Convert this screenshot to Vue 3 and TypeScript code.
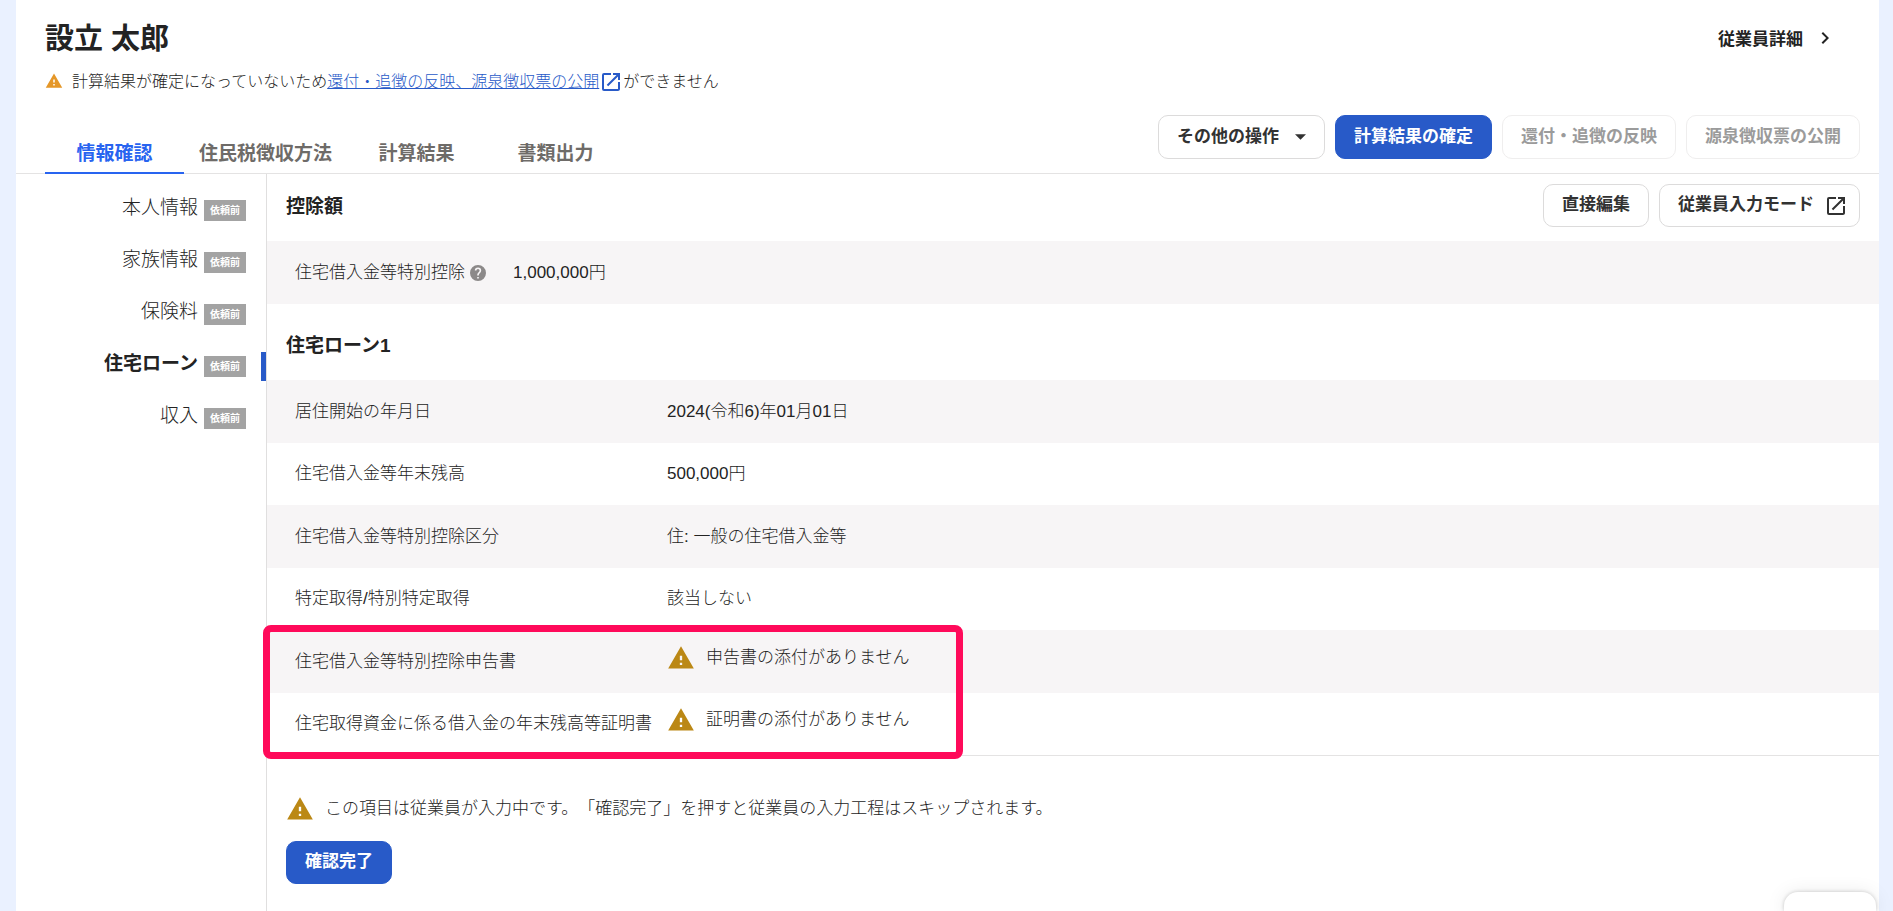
<script setup lang="ts">
import { ref } from 'vue'

interface Row {
  label: string
  value: string
  warn?: boolean
}

const WARNING_PATH = 'M1 21h22L12 2 1 21zm12-3h-2v-2h2v2zm0-4h-2v-4h2v4z'
const EXTERNAL_PATH =
  'M19 19H5V5h7V3H5a2 2 0 0 0-2 2v14a2 2 0 0 0 2 2h14c1.1 0 2-.9 2-2v-7h-2v7zM14 3v2h3.59l-9.83 9.83 1.41 1.41L19 6.41V10h2V3h-7z'

const tabs: string[] = ['情報確認', '住民税徴収方法', '計算結果', '書類出力']
const activeTab = ref('情報確認')

const sections: string[] = ['本人情報', '家族情報', '保険料', '住宅ローン', '収入']
const activeSection = ref('住宅ローン')

const loanRows: Row[] = [
  { label: '居住開始の年月日', value: '2024(令和6)年01月01日' },
  { label: '住宅借入金等年末残高', value: '500,000円' },
  { label: '住宅借入金等特別控除区分', value: '住: 一般の住宅借入金等' },
  { label: '特定取得/特別特定取得', value: '該当しない' },
  { label: '住宅借入金等特別控除申告書', value: '申告書の添付がありません', warn: true },
  { label: '住宅取得資金に係る借入金の年末残高等証明書', value: '証明書の添付がありません', warn: true },
]
</script>

<template>
  <div class="page">
    <div class="panel">
      <header class="header">
        <div class="title-row">
          <h1>設立 太郎</h1>
          <a class="detail-link" href="#detail">
            従業員詳細
            <svg class="chevron" viewBox="0 0 24 24" aria-hidden="true">
              <path d="M10 6 8.59 7.41 13.17 12l-4.58 4.59L10 18l6-6z" />
            </svg>
          </a>
        </div>
        <p class="alert">
          <svg class="alert-icon" viewBox="0 0 24 24" aria-hidden="true"><path :d="WARNING_PATH" /></svg>
          <span>計算結果が確定になっていないため</span>
          <a href="#help">
            <span class="link-text">還付・追徴の反映、源泉徴収票の公開</span>
            <svg class="ext" viewBox="0 0 24 24" aria-hidden="true"><path :d="EXTERNAL_PATH" /></svg>
          </a>
          <span>ができません</span>
        </p>
        <div class="tab-row">
          <nav class="tabs">
            <a
              v-for="tab in tabs"
              :key="tab"
              href="#"
              :class="['tab', { active: tab === activeTab }]"
              @click.prevent="activeTab = tab"
            >{{ tab }}</a>
          </nav>
          <div class="actions">
            <button type="button" class="btn menu-btn">
              その他の操作
              <svg class="caret" viewBox="0 0 12 6" aria-hidden="true"><path d="M0 0h12L6 6z" /></svg>
            </button>
            <button type="button" class="btn primary">計算結果の確定</button>
            <button type="button" class="btn" disabled>還付・追徴の反映</button>
            <button type="button" class="btn" disabled>源泉徴収票の公開</button>
          </div>
        </div>
      </header>

      <div class="body">
        <nav class="side">
          <a
            v-for="section in sections"
            :key="section"
            href="#"
            :class="['side-item', { active: section === activeSection }]"
            @click.prevent="activeSection = section"
          >
            <span class="side-label">{{ section }}</span>
            <span class="badge">依頼前</span>
          </a>
        </nav>

        <main class="main">
          <div class="section-head">
            <h2>控除額</h2>
            <div class="actions">
              <button type="button" class="btn">直接編集</button>
              <button type="button" class="btn mode-btn">
                従業員入力モード
                <svg class="ext" viewBox="0 0 24 24" aria-hidden="true"><path :d="EXTERNAL_PATH" /></svg>
              </button>
            </div>
          </div>
          <table class="summary">
            <tbody>
              <tr>
                <th scope="row">
                  <span class="with-help">
                    住宅借入金等特別控除
                    <svg class="help" viewBox="0 0 20 20" aria-hidden="true">
                      <path
                        d="M10 0a10 10 0 1 0 0 20 10 10 0 0 0 0-20zm1 17H9v-2h2v2zm2.07-7.75-.9.92C11.45 10.9 11 11.5 11 13H9v-.5c0-1.1.45-2.1 1.17-2.83l1.24-1.26c.37-.36.59-.86.59-1.41a2 2 0 1 0-4 0H6a4 4 0 1 1 8 0c0 .88-.36 1.68-.93 2.25z"
                      />
                    </svg>
                  </span>
                </th>
                <td>1,000,000円</td>
              </tr>
            </tbody>
          </table>

          <h2 class="loan-title">住宅ローン1</h2>
          <div class="loan">
            <table>
              <tbody>
                <tr v-for="row in loanRows" :key="row.label">
                  <th scope="row">{{ row.label }}</th>
                  <td>
                    <span v-if="row.warn" class="notice">
                      <svg class="warn" viewBox="0 0 24 24" aria-hidden="true"><path :d="WARNING_PATH" /></svg>
                      {{ row.value }}
                    </span>
                    <template v-else>{{ row.value }}</template>
                  </td>
                </tr>
              </tbody>
            </table>
            <div class="highlight" aria-hidden="true"></div>
          </div>

          <div class="confirm">
            <p class="notice confirm-text">
              <svg class="warn" viewBox="0 0 24 24" aria-hidden="true"><path :d="WARNING_PATH" /></svg>
              <span>この項目は従業員が入力中です。「確認完了」を押すと従業員の入力工程はスキップされます。</span>
            </p>
            <button type="button" class="btn primary">確認完了</button>
          </div>
        </main>
      </div>
    </div>
    <div class="floating" aria-hidden="true"></div>
  </div>
</template>

<style>
body {
  margin: 0;
  background: #eaf1ff;
}
</style>

<style scoped>
.page {
  display: flex;
  min-height: 100vh;
  padding: 0 14px 0 16px;
  box-sizing: border-box;
  background: #eaf1ff;
  color: #232323;
  font-family: 'Liberation Sans', 'Noto Sans CJK JP', sans-serif;
  font-size: 17px;
  font-weight: 300;
  text-spacing-trim: space-all;
}
.panel {
  flex: 1;
  display: flex;
  flex-direction: column;
  background: #fff;
}
a {
  color: inherit;
  text-decoration: none;
}
svg {
  flex: none;
  fill: currentColor;
}
h1,
h2,
p {
  margin: 0;
}
.header {
  padding: 14px 19px 0 29px;
  border-bottom: 1px solid #e4e3e3;
}
.title-row {
  display: flex;
  align-items: center;
  justify-content: space-between;
  height: 48px;
}
h1 {
  padding-top: 2px;
  font-size: 29px;
  line-height: 46px;
  color: #232323;
}
.detail-link {
  display: flex;
  align-items: center;
  gap: 10px;
  padding: 0 23px 2px 0;
  font-weight: 700;
}
.chevron {
  width: 24px;
  height: 24px;
  margin-top: 2px;
}
.alert {
  display: flex;
  align-items: center;
  height: 36px;
  font-size: 16px;
}
.alert-icon {
  width: 18px;
  height: 18px;
  margin: 2px 9px 0 0;
  color: #e59728;
}
.alert a {
  display: flex;
  align-items: center;
  color: #285ac8;
}
.alert .ext {
  margin-top: 4px;
}
.link-text {
  text-decoration: underline;
}
.ext {
  width: 24px;
  height: 24px;
}
.tab-row {
  display: flex;
  justify-content: space-between;
  height: 75px;
}
.tabs {
  display: flex;
  align-items: flex-end;
}
.tab {
  min-width: 109px;
  padding: 0 15px;
  margin-bottom: -1px;
  border-bottom: 2px solid transparent;
  font-size: 19px;
  line-height: 36px;
  font-weight: 700;
  text-align: center;
  color: #6e6b68;
}
.tab.active {
  color: #2864f0;
  border-color: #2864f0;
}
.actions {
  display: flex;
  align-items: flex-start;
  gap: 10px;
}
.tab-row .actions {
  padding-top: 17px;
}
.btn {
  display: flex;
  align-items: center;
  height: 43px;
  padding: 0 18px 6px;
  box-sizing: border-box;
  border: 1px solid #dcdbdb;
  border-radius: 10px;
  background: #fff;
  color: #323232;
  font: inherit;
  font-weight: 700;
  white-space: nowrap;
}
.tab-row .btn {
  height: 44px;
}
.btn.primary {
  border-color: #285ac8;
  background: #285ac8;
  color: #fff;
}
.btn:disabled {
  border-color: #efeeee;
  color: #9b9b9b;
}
.menu-btn {
  gap: 16px;
}
.caret {
  width: 11px;
  height: 6px;
  margin-top: 6px;
}
.mode-btn {
  gap: 10px;
  padding-right: 11px;
}
.mode-btn .ext {
  margin-top: 6px;
}
.body {
  flex: 1;
  display: flex;
}
.side {
  flex: none;
  width: 250px;
  padding-top: 7px;
  border-right: 1px solid #e0dfdf;
}
.side-item {
  display: flex;
  align-items: center;
  justify-content: flex-end;
  gap: 6px;
  height: 52px;
  padding-right: 20px;
  font-size: 19px;
}
.side-label {
  padding-bottom: 4px;
}
.side-item.active {
  position: relative;
  font-weight: 700;
}
.side-item.active::after {
  content: '';
  position: absolute;
  right: 0;
  top: 15px;
  width: 5px;
  height: 29px;
  background: #285ac8;
}
.badge {
  width: 42px;
  margin-top: 6px;
  background: #a3a3a3;
  color: #fff;
  font-size: 10px;
  font-weight: 700;
  line-height: 21px;
  text-align: center;
}
.main {
  flex: 1;
}
.section-head {
  display: flex;
  justify-content: space-between;
  height: 67px;
  padding: 0 19px;
}
.section-head .actions {
  padding-top: 10px;
}
h2 {
  font-size: 19px;
  line-height: 66px;
  color: #232323;
}
.loan-title {
  height: 76px;
  padding: 0 19px;
  line-height: 84px;
}
table {
  width: 100%;
  border-collapse: collapse;
}
tr {
  height: 62px;
}
tr:nth-child(odd) {
  height: 63px;
  background: #f7f5f6;
}
th,
td {
  padding: 0;
  font-weight: 300;
  text-align: left;
  line-height: 24px;
}
th {
  width: 372px;
  padding-left: 28px;
  white-space: nowrap;
}
.summary th {
  width: 218px;
}
.with-help {
  display: flex;
  align-items: center;
  gap: 5px;
}
.help {
  width: 16px;
  height: 16px;
  color: #8c8989;
}
.loan {
  position: relative;
  border-bottom: 1px solid #e4e3e3;
}
.notice {
  display: flex;
  align-items: center;
  gap: 11px;
}
td .notice {
  padding-bottom: 8px;
}
.warn {
  width: 28px;
  height: 28px;
  color: #bb8815;
}
.highlight {
  position: absolute;
  left: -4px;
  bottom: -4px;
  width: 700px;
  height: 134px;
  box-sizing: border-box;
  border: 7px solid #ff0a5a;
  border-radius: 8px;
}
.confirm {
  padding: 38px 19px 0;
}
.confirm-text {
  margin-bottom: 18px;
}
.confirm-text span {
  padding-bottom: 4px;
}
.floating {
  position: fixed;
  right: 17px;
  bottom: 0;
  width: 92px;
  height: 19px;
  border-radius: 14px 14px 0 0;
  background: #fff;
  box-shadow: 0 0 4px rgba(0, 0, 0, 0.2), 0 2px 20px rgba(0, 0, 0, 0.1);
}
</style>
